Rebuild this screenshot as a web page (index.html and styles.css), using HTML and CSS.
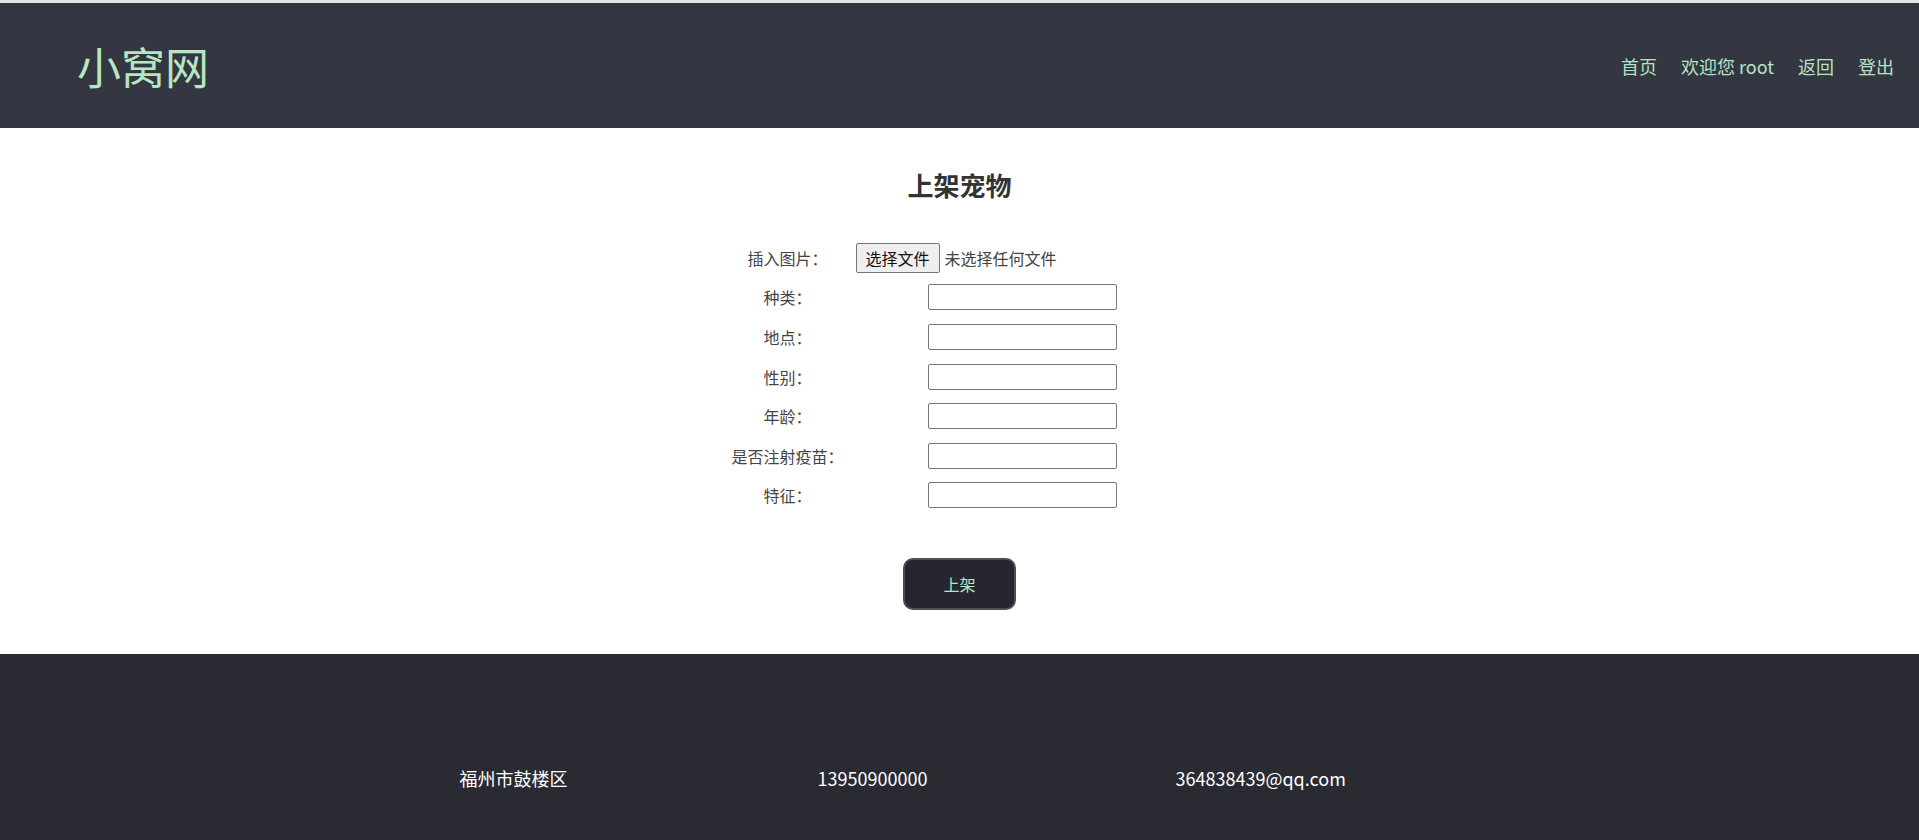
FILE: index.html
```html
<!DOCTYPE html>
<html lang="zh-CN">
  <head>
    <meta charset="UTF-8" />
    <meta name="viewport" content="width=device-width, initial-scale=1.0" />
    <title>上架宠物 - 小窝网</title>
    <link rel="stylesheet" href="styles.css">
  </head>
  <body>
    <div class="header">
      <div class="logo">小窝网</div>
      <ul class="nav">
        <li><a href="#">首页</a></li>
        <li><a href="#">欢迎您 root</a></li>
        <li><a href="#">返回</a></li>
        <li><a href="#">登出</a></li>
      </ul>
    </div>

    <div class="main">
      <h2 class="title">上架宠物</h2>
      <form class="pet-form" onsubmit="return false;">
        <div class="row">
          <label>插入图片：</label>
          <div class="field">
            <label class="file-btn">选择文件<input type="file" class="file-input"></label>
            <span class="file-name">未选择任何文件</span>
          </div>
        </div>
        <div class="row">
          <label>种类：</label>
          <div class="field"><input type="text" class="text-input"></div>
        </div>
        <div class="row">
          <label>地点：</label>
          <div class="field"><input type="text" class="text-input"></div>
        </div>
        <div class="row">
          <label>性别：</label>
          <div class="field"><input type="text" class="text-input"></div>
        </div>
        <div class="row">
          <label>年龄：</label>
          <div class="field"><input type="text" class="text-input"></div>
        </div>
        <div class="row">
          <label>是否注射疫苗：</label>
          <div class="field"><input type="text" class="text-input"></div>
        </div>
        <div class="row">
          <label>特征：</label>
          <div class="field"><input type="text" class="text-input"></div>
        </div>
        <div class="actions">
          <button type="submit" class="submit-btn">上架</button>
        </div>
      </form>
    </div>

    <div class="footer">
      <ul class="footer-list">
        <li>福州市鼓楼区</li>
        <li>13950900000</li>
        <li>364838439@qq.com</li>
      </ul>
    </div>
  </body>
</html>
```

FILE: styles.css
```css
html,
body {
  margin: 0;
  padding: 0;
}
body {
  font-family: "Noto Sans CJK SC", "Noto Sans", sans-serif;
  background-color: #e4e4e4;
  padding-top: 3px;
  color: #333;
}
ul {
  list-style: none;
  margin: 0;
  padding: 0;
}

/* 头部 */
.header {
  height: 125px;
  background-color: #343641;
  display: flex;
  align-items: center;
  justify-content: space-between;
  padding: 0 25px 0 77px;
}
.logo {
  font-size: 44px;
  line-height: 1;
  color: #b6e6c2;
}
.nav {
  display: flex;
  gap: 24px;
}
.nav a {
  font-size: 18px;
  color: #b3e4c3;
  text-decoration: none;
}

/* 内容 */
.main {
  background-color: #fff;
  padding: 41px 0 44px;
}
.title {
  margin: 0 0 37px;
  text-align: center;
  font-size: 26px;
  line-height: 32px;
  font-weight: bold;
  color: #333;
}
.pet-form {
  width: 484px;
  margin: 0 auto;
}
.row {
  display: grid;
  grid-template-columns: 140px 1fr;
  align-items: center;
  height: 39.6px;
}
.row > label {
  text-align: center;
  font-size: 16px;
  color: #444;
}
.field {
  display: flex;
  align-items: center;
}
.file-btn {
  box-sizing: border-box;
  height: 30px;
  padding: 0 9px;
  margin-left: -2px;
  display: flex;
  align-items: center;
  font-size: 16px;
  color: #111;
  background-color: #efefef;
  border: 1px solid #767676;
  border-radius: 2px;
  cursor: pointer;
}
.file-input {
  display: none;
}
.file-name {
  margin-left: 5px;
  font-size: 16px;
  color: #444;
}
.text-input {
  box-sizing: border-box;
  width: 189px;
  height: 26px;
  margin-left: 70px;
  border: 1px solid #767676;
  border-radius: 2px;
  display: block;
}
.actions {
  display: flex;
  justify-content: center;
  margin-top: 43px;
}
.submit-btn {
  width: 113px;
  height: 52px;
  background-color: #25262e;
  color: #b6e6c2;
  font-family: inherit;
  font-size: 16px;
  border: 2px solid #4c4d55;
  border-radius: 10px;
  cursor: pointer;
}

/* 底部 */
.footer {
  background-color: #292a32;
  height: 190px;
  box-sizing: border-box;
  padding-top: 112px;
}
.footer-list {
  display: flex;
  margin-left: calc(50% - 500px);
}
.footer-list li {
  width: 358px;
  font-size: 18px;
  line-height: 24px;
  color: #fff;
}
```
